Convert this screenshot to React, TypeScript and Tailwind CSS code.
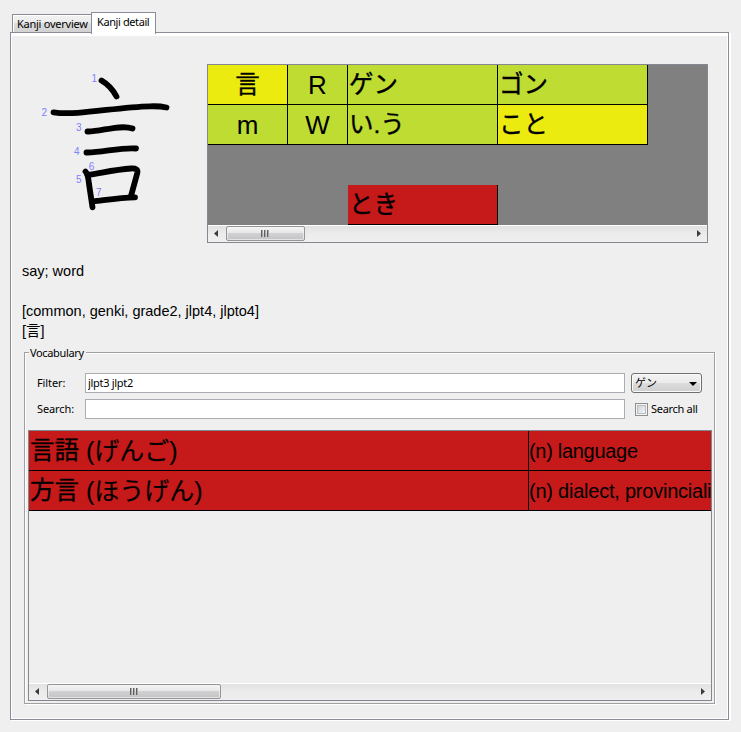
import React from "react";

const ui = "font-['Noto_Sans','Noto_Sans_CJK_JP',sans-serif] text-[11px] text-black whitespace-nowrap";
const arial = "font-['Liberation_Sans','Noto_Sans_CJK_JP',sans-serif] text-black whitespace-nowrap";

function KanjiStrokes() {
  const strokes = [
    "M71.5 20.5Q81 26 86.5 36.5",
    "M23.5 52.3C48 56 85 47 120 46.3Q130 46 136.5 47.5",
    "M57.5 71.5C70 72 90 64 102.5 68.5",
    "M56.5 92.5C70 93 92 87 106 88.5",
    "M55.5 111.5Q58 114 59 124L62.500 147.300",
    "M57.500 115.200C72 113 85 109.500 101 108.500Q108.500 108 107.300 113L101 136",
    "M63 141.500C76 140 90 137.500 105 137.300",
  ];
  const labels: [string, number, number][] = [
    ["1", 61.5, 21.5],
    ["2", 11.5, 56],
    ["3", 46, 71.3],
    ["4", 44, 95],
    ["5", 46, 123],
    ["6", 58.7, 110],
    ["7", 66, 136],
  ];
  return (
    <svg width="150" height="160" viewBox="0 0 150 160" className="shrink-0">
      <g fill="none" stroke="#000" strokeWidth="5.8" strokeLinecap="round" strokeLinejoin="round">
        {strokes.map((d) => (
          <path key={d} d={d} />
        ))}
      </g>
      <g fill="#8080ff" className="font-['Liberation_Sans',sans-serif] text-[10px]">
        {labels.map(([n, x, y]) => (
          <text key={n} x={x} y={y}>
            {n}
          </text>
        ))}
      </g>
    </svg>
  );
}

function Arrow({ left }: { left?: boolean }) {
  return (
    <svg width="4" height="7" viewBox="0 0 4 7" className="relative -top-px shrink-0">
      <path d={left ? "M4 0V7L0 3.5Z" : "M0 0V7L4 3.5Z"} fill="#3c3c3c" />
    </svg>
  );
}

function ScrollBar({ thumb }: { thumb: string }) {
  return (
    <div className="flex h-[17px] items-start border-t border-white bg-gradient-to-b from-[#e2e2e2] via-[#ececec] to-[#efefef]">
      <div className="flex h-4 w-[18px] shrink-0 items-center pl-[6px]">
        <Arrow left />
      </div>
      <div
        className={`flex h-[15px] shrink-0 items-center justify-center gap-px rounded-[2px] border border-[#959595] bg-[linear-gradient(#f5f5f5,#e6e6e7_48%,#d1d1d3_50%,#c3c3c6)] pr-px shadow-[inset_0_0_0_1px_#f4f4f4aa] ${thumb}`}
      >
        {[0, 1, 2].map((i) => (
          <span key={i} className="h-[7px] w-[2px] border-l border-[#606060] bg-[#a8a8a8]" />
        ))}
      </div>
      <div className="flex h-4 grow items-center justify-end pr-[6px]">
        <Arrow />
      </div>
    </div>
  );
}

function Cell({ children, className }: { children: React.ReactNode; className: string }) {
  return (
    <div className={`flex h-10 items-center border-r border-b border-black text-[24.5px] leading-[24px] ${className}`}>
      <span>{children}</span>
    </div>
  );
}

function ReadingGrid() {
  return (
    <div className={`mt-[31px] h-[179px] w-[501px] border border-[#828790] bg-[#808080] ${arial}`}>
      <div className="grid h-40 grid-cols-[80px_60px_150px_150px] grid-rows-[40px_40px_40px_40px]">
        <Cell className="justify-center bg-[#ebeb10] [-webkit-text-stroke:0.35px_#000]">言</Cell>
        <Cell className="justify-center bg-[#bedc32] text-[26px]">R</Cell>
        <Cell className="bg-[#bedc32] pl-px [-webkit-text-stroke:0.35px_#000]">ゲン</Cell>
        <Cell className="bg-[#bedc32] pl-px [-webkit-text-stroke:0.35px_#000]">ゴン</Cell>
        <Cell className="justify-center bg-[#bedc32] text-[26px]">m</Cell>
        <Cell className="justify-center bg-[#bedc32] text-[26px]">W</Cell>
        <Cell className="bg-[#bedc32] pl-px [-webkit-text-stroke:0.35px_#000]">い.う</Cell>
        <Cell className="bg-[#ebeb10] pl-px [-webkit-text-stroke:0.35px_#000]">こと</Cell>
        <Cell className="col-start-3 row-start-4 bg-[#c61919] pl-px [-webkit-text-stroke:0.35px_#000]">とき</Cell>
      </div>
      <ScrollBar thumb="w-[79px]" />
    </div>
  );
}

function VocabRow({ word, reading, meaning, tracking }: { word: string; reading: string; meaning: string; tracking: string }) {
  return (
    <div className="flex h-10 border-b border-black bg-[#c61919]">
      <div className="flex w-[500px] shrink-0 items-center gap-[7px] border-r border-black pt-px pl-px leading-[24px]">
        <span className="text-[24.5px] [-webkit-text-stroke:0.3px_#000]">{word}</span>
        <span className="text-[25px] [-webkit-text-stroke:0.15px_#000]">({reading})</span>
      </div>
      <div className={`flex items-center text-[20px] ${tracking}`}>{meaning}</div>
    </div>
  );
}

function Field({ value }: { value: string }) {
  return (
    <input
      defaultValue={value}
      className={`h-5 w-[540px] rounded-none border border-[#abadb3] bg-white px-[2px] pb-[2px] outline-none tracking-[-0.3px] ${ui}`}
    />
  );
}

function Vocabulary() {
  return (
    <div className="relative mt-[11px] ml-[13px] h-[352px] w-[691px] border border-[#a0a0a0] pt-5 shadow-[1px_1px_0_#fff,inset_1px_1px_0_#fff]">
      <div className={`absolute -top-[8px] left-[4px] w-[57px] bg-[#efefef] pl-px leading-[16px] tracking-[-0.35px] ${ui}`}>
        Vocabulary
      </div>
      <div className="flex h-5 items-center pl-3">
        <label className={`w-12 tracking-[-0.1px] ${ui}`}>Filter:</label>
        <Field value="jlpt3 jlpt2" />
        <button className="ml-[6px] flex h-5 w-[71px] items-center justify-between rounded-[3px] border border-[#707070] bg-[linear-gradient(#f2f2f2,#ebebeb_48%,#dddddd_50%,#cfcfcf)] pr-1 pl-[3px] shadow-[inset_0_0_0_1px_#fafafa]">
          <span className="relative -top-px font-['Noto_Sans_CJK_JP',sans-serif] text-[11px] leading-[16px]">ゲン</span>
          <svg width="8" height="4" viewBox="0 0 8 4" className="relative top-px">
            <path d="M0 0H8L4 4Z" fill="#000" />
          </svg>
        </button>
      </div>
      <div className="mt-[6px] flex h-5 items-center pl-3">
        <label className={`w-12 tracking-[-0.1px] ${ui}`}>Search:</label>
        <Field value="" />
        <div className="ml-[10px] h-[13px] w-[13px] border border-[#8e8f8f] bg-[#f4f4f4] p-px">
          <div className="h-full w-full border border-[#b8bec5] bg-gradient-to-br from-[#cfd3d8] to-[#f6f6f6]" />
        </div>
        <span className={`ml-[3px] tracking-[-0.3px] ${ui}`}>Search all</span>
      </div>
      <div className={`mt-[11px] ml-[3px] flex h-[271px] w-[684px] flex-col overflow-hidden border border-[#828790] ${arial}`}>
        <VocabRow word="言語" reading="げんご" meaning="(n) language" tracking="tracking-[-0.3px]" />
        <VocabRow word="方言" reading="ほうげん" meaning="(n) dialect, provinciali" tracking="tracking-[-0.23px]" />
        <div className="grow" />
        <ScrollBar thumb="w-[174px]" />
      </div>
    </div>
  );
}

export default function App() {
  return (
    <div className="h-[732px] w-[741px] overflow-hidden bg-[#efefef] pt-3">
      <div className="flex h-5 items-end pl-3">
        <div
          className={`flex h-[18px] w-[79px] items-center border border-r-0 border-b-0 border-[#898c95] bg-[linear-gradient(#f2f2f2,#ebebeb_48%,#dddddd_50%,#d2d2d2)] pt-px pl-1 tracking-[-0.25px] shadow-[inset_1px_1px_0_#fff] ${ui}`}
        >
          Kanji overview
        </div>
        <div
          className={`relative z-10 -mb-[2px] flex h-[22px] w-[65px] items-center border border-b-0 border-[#898c95] bg-white pb-[2px] pl-[5px] tracking-[-0.4px] ${ui}`}
        >
          Kanji detail
        </div>
      </div>
      <div className="ml-[10px] h-[688px] w-[719px] border border-[#898c95] shadow-[inset_0_3px_0_#fff,inset_0_0_0_1px_#fff,1px_1px_0_#fff,2px_1px_0_#fff]">
        <div className="flex h-[228px] items-start pl-[19px]">
          <div className="mt-[27px] mr-[27px]">
            <KanjiStrokes />
          </div>
          <ReadingGrid />
        </div>
        <div className={`pl-[11px] text-[14.5px] leading-[20px] ${arial}`}>
          <div className="h-10">say; word</div>
          <div className="h-5">[common, genki, grade2, jlpt4, jlpto4]</div>
          <div className="h-5">[言]</div>
        </div>
        <Vocabulary />
      </div>
    </div>
  );
}
